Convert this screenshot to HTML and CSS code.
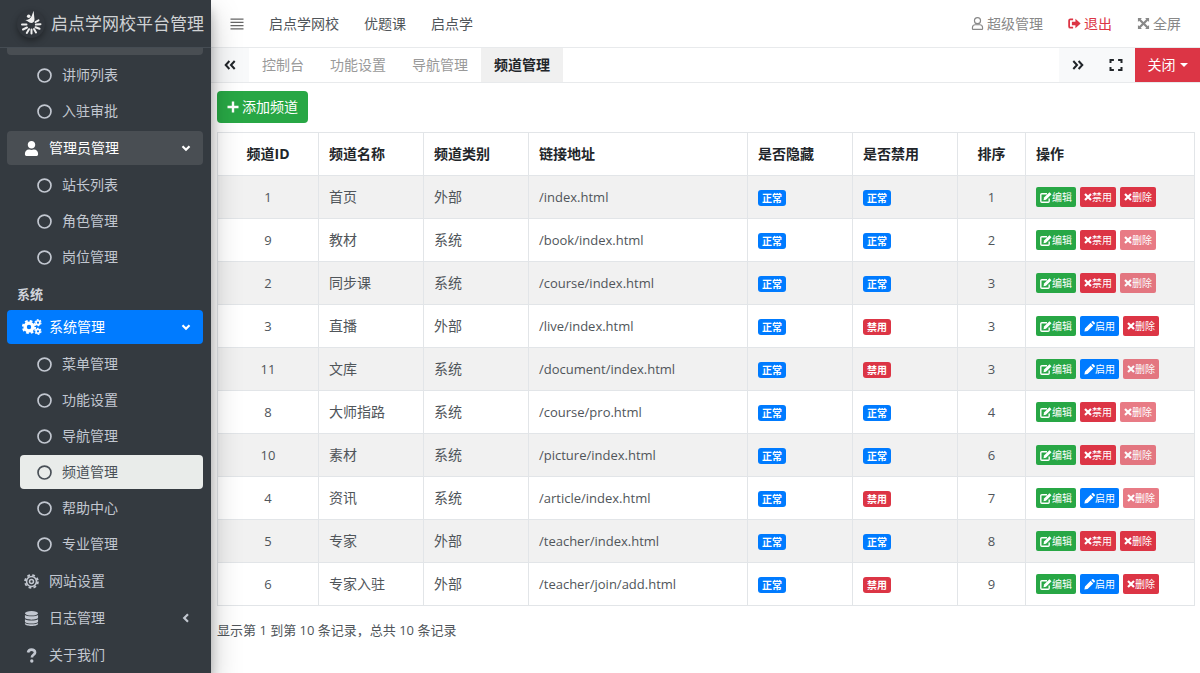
FILE: index.html
```html
<!DOCTYPE html>
<html lang="zh-CN">
<head>
<meta charset="utf-8">
<title>启点学网校平台管理</title>
<link rel="stylesheet" href="styles.css">
</head>
<body>
<svg class="sprite" aria-hidden="true">
  <symbol id="circle" viewBox="0 0 16 16"><circle cx="8" cy="8" r="6.9" fill="none" stroke="currentColor" stroke-width="1.8"/></symbol>
  <symbol id="user" viewBox="0 0 448 512"><path fill="currentColor" d="M224 256c70.7 0 128-57.3 128-128S294.7 0 224 0 96 57.3 96 128s57.3 128 128 128zm89.6 32h-16.7c-22.2 10.2-46.9 16-72.9 16s-50.6-5.8-72.9-16h-16.7C60.2 288 0 348.2 0 422.4V464c0 26.5 21.5 48 48 48h352c26.5 0 48-21.5 48-48v-41.6c0-74.2-60.2-134.4-134.4-134.4z"/></symbol>
  <symbol id="user-o" viewBox="0 0 448 512"><g fill="none" stroke="currentColor" stroke-width="46"><circle cx="224" cy="144" r="120"/><path d="M135 304h178c62 0 111 52 111 118v42c0 14-10 25-24 25H48c-14 0-24-11-24-25v-42c0-66 49-118 111-118z"/></g></symbol>
  <symbol id="down" viewBox="0 0 10 10"><path d="M1.500 3.200 5 6.700 8.500 3.200" fill="none" stroke="currentColor" stroke-width="2.200"/></symbol>
  <symbol id="left" viewBox="0 0 10 10"><path d="M7 1.200 3.200 5 7 8.800" fill="none" stroke="currentColor" stroke-width="2.200"/></symbol>
  <symbol id="cogs" viewBox="0 0 20 16"><g fill="none" stroke="currentColor"><circle cx="7" cy="8" r="3.900" stroke-width="3.400"/><circle cx="7" cy="8" r="6.100" stroke-width="2" stroke-dasharray="2.700 2.090"/><circle cx="16" cy="3.700" r="1.900" stroke-width="1.600"/><circle cx="16" cy="3.700" r="3" stroke-width="1.200" stroke-dasharray="1.800 1.340"/><circle cx="16" cy="12.300" r="1.900" stroke-width="1.600"/><circle cx="16" cy="12.300" r="3" stroke-width="1.200" stroke-dasharray="1.800 1.340"/></g></symbol>
  <symbol id="gear" viewBox="0 0 16 16"><g fill="none" stroke="currentColor"><circle cx="8" cy="8" r="5.300" stroke-width="1.700"/><circle cx="8" cy="8" r="6.900" stroke-width="1.900" stroke-dasharray="2.900 2.519"/><circle cx="8" cy="8" r="2.100" stroke-width="1.600"/></g></symbol>
  <symbol id="database" viewBox="0 0 14 16"><g fill="currentColor"><ellipse cx="7" cy="2.500" rx="7" ry="2.400"/><path d="M0 4.300c2 1.800 12 1.800 14 0V7c0 3-14 3-14 0zM0 8.700c2 1.800 12 1.800 14 0v2.500c0 3-14 3-14 0zM0 12.900c2 1.800 12 1.800 14 0v.600c0 3.200-14 3.200-14 0z"/></g></symbol>
  <symbol id="question" viewBox="0 0 12 16"><path d="M2.300 4.800C2.700 2.600 4.200 1.700 6 1.700c2.200 0 3.800 1.200 3.800 3 0 2.600-3.400 2.500-3.400 5.400" fill="none" stroke="currentColor" stroke-width="2.800"/><circle cx="6.300" cy="13.900" r="1.800" fill="currentColor"/></symbol>
  <symbol id="bars" viewBox="0 0 14 14"><path d="M.500 2.200h13M.500 5.400h13M.500 8.600h13M.500 11.800h13" fill="none" stroke="currentColor" stroke-width="1.300"/></symbol>
  <symbol id="signout" viewBox="0 0 14 12"><path d="M5.500 1.500H2.600c-.900 0-1.400.500-1.400 1.400v6.200c0 .900.500 1.400 1.400 1.400h2.900" fill="none" stroke="currentColor" stroke-width="1.900"/><path d="M8 .900 13.600 6 8 11.100V8H4.200V4H8z" fill="currentColor"/></symbol>
  <symbol id="expand" viewBox="0 0 14 14"><path d="M1 1h4.300L4 2.300l3 3 3-3L8.700 1H13v4.300L11.700 4l-3 3 3 3L13 8.700V13H8.700l1.300-1.300-3-3-3 3L5.300 13H1V8.700L2.300 10l3-3-3-3L1 5.300z" fill="currentColor"/></symbol>
  <symbol id="corners" viewBox="0 0 14 14"><path d="M1.500 5V2h3.400M9.100 2h3.400v3M12.500 9v3H9.100M4.900 12H1.500V9" fill="none" stroke="currentColor" stroke-width="2"/></symbol>
  <symbol id="dleft" viewBox="0 0 12 10"><path d="M5.400 1 1.700 5l3.700 4M10.700 1 7 5l3.700 4" fill="none" stroke="currentColor" stroke-width="2"/></symbol>
  <symbol id="dright" viewBox="0 0 12 10"><path d="M1.300 1 5 5 1.300 9M6.600 1l3.700 4-3.700 4" fill="none" stroke="currentColor" stroke-width="2"/></symbol>
  <symbol id="caret" viewBox="0 0 8 4"><path d="M0 0h8L4 4z" fill="currentColor"/></symbol>
  <symbol id="plus" viewBox="0 0 12 12"><path d="M6 .500v11M.500 6h11" fill="none" stroke="currentColor" stroke-width="2.400"/></symbol>
  <symbol id="times" viewBox="0 0 8 8"><path d="m1 1 6 6M7 1 1 7" fill="none" stroke="currentColor" stroke-width="2.200"/></symbol>
  <symbol id="edit" viewBox="0 0 12 11"><path d="M7 1.800H1.800c-.600 0-1 .400-1 1v6.400c0 .600.400 1 1 1h6.400c.600 0 1-.400 1-1V6.500" fill="none" stroke="currentColor" stroke-width="1.400"/><path d="M3.500 8.200 4 5.600 9.500.200l2 2L6 7.700z" fill="currentColor"/></symbol>
  <symbol id="pencil" viewBox="0 0 11 11"><path d="M.400 10.600 1 7.400 6.600 1.800l2.600 2.600L3.600 10zM7.300 1.100l.700-.700c.600-.500 1.200-.400 1.600 0l1 1c.500.500.500 1.100 0 1.600l-.700.700z" fill="currentColor"/></symbol>
</svg>
<div class="app">
  <aside class="sidebar">
    <a class="brand" href="#">
      <svg class="logo" viewBox="0 0 28 28" aria-hidden="true"><g stroke="#eee" stroke-width="2" stroke-linecap="round" fill="none"><path d="M5 14.500h4.500M6 19.500l4-2M9.800 23l2.200-3.800M14.500 23.500v-4M19 22.500l-2-3.400M22.500 18.800l-4-1.600M23.500 14.200l-4.600.400M21.500 10.300 18.500 12"/></g><circle cx="11.700" cy="6.200" r="1.800" fill="#eee"/><path d="M7 9.700c3.200.900 6.200-.800 7.600-3.500l2-5.500.900 8.500c0 2.200-1.300 3.700-3.300 3.700-2.500 0-3.700-2.600-7.200-3.200z" fill="#eee"/></svg>
      <span>启点学网校平台管理</span>
    </a>
    <nav class="side-nav">
      <div class="nav-cut"></div>
      <div class="tree">
        <a class="nav-link" href="#"><svg><use href="#circle"/></svg>讲师列表</a>
        <a class="nav-link" href="#"><svg><use href="#circle"/></svg>入驻审批</a>
      </div>
      <a class="nav-link open" href="#"><svg><use href="#user"/></svg>管理员管理<svg class="arrow"><use href="#down"/></svg></a>
      <div class="tree">
        <a class="nav-link" href="#"><svg><use href="#circle"/></svg>站长列表</a>
        <a class="nav-link" href="#"><svg><use href="#circle"/></svg>角色管理</a>
        <a class="nav-link" href="#"><svg><use href="#circle"/></svg>岗位管理</a>
      </div>
      <h2 class="nav-header">系统</h2>
      <a class="nav-link current" href="#"><svg class="wide"><use href="#cogs"/></svg>系统管理<svg class="arrow"><use href="#down"/></svg></a>
      <div class="tree">
        <a class="nav-link" href="#"><svg><use href="#circle"/></svg>菜单管理</a>
        <a class="nav-link" href="#"><svg><use href="#circle"/></svg>功能设置</a>
        <a class="nav-link" href="#"><svg><use href="#circle"/></svg>导航管理</a>
        <a class="nav-link selected" href="#"><svg><use href="#circle"/></svg>频道管理</a>
        <a class="nav-link" href="#"><svg><use href="#circle"/></svg>帮助中心</a>
        <a class="nav-link" href="#"><svg><use href="#circle"/></svg>专业管理</a>
      </div>
      <a class="nav-link" href="#"><svg><use href="#gear"/></svg>网站设置</a>
      <a class="nav-link" href="#"><svg><use href="#database"/></svg>日志管理<svg class="arrow"><use href="#left"/></svg></a>
      <a class="nav-link" href="#"><svg><use href="#question"/></svg>关于我们</a>
    </nav>
  </aside>
  <div class="main">
    <header class="topbar">
      <button class="menu-btn" type="button" aria-label="菜单"><svg><use href="#bars"/></svg></button>
      <a href="#">启点学网校</a>
      <a href="#">优题课</a>
      <a href="#">启点学</a>
      <div class="top-right">
        <a href="#"><svg><use href="#user-o"/></svg>超级管理</a>
        <a class="logout" href="#"><svg><use href="#signout"/></svg>退出</a>
        <a href="#"><svg><use href="#expand"/></svg>全屏</a>
      </div>
    </header>
    <div class="tabbar">
      <button class="tab-tool" type="button" aria-label="向左"><svg><use href="#dleft"/></svg></button>
      <nav class="tabs">
        <a href="#">控制台</a>
        <a href="#">功能设置</a>
        <a href="#">导航管理</a>
        <a class="active" href="#">频道管理</a>
      </nav>
      <button class="tab-tool" type="button" aria-label="向右"><svg><use href="#dright"/></svg></button>
      <button class="tab-tool" type="button" aria-label="最大化"><svg class="max"><use href="#corners"/></svg></button>
      <button class="close-btn" type="button">关闭<svg><use href="#caret"/></svg></button>
    </div>
    <main class="content">
      <button class="add-btn" type="button"><svg><use href="#plus"/></svg>添加频道</button>
      <table class="grid">
        <colgroup><col class="c-id"><col class="c-mid"><col class="c-mid"><col class="c-url"><col class="c-mid"><col class="c-mid"><col class="c-sort"><col class="c-ops"></colgroup>
        <thead>
          <tr><th class="num">频道ID</th><th>频道名称</th><th>频道类别</th><th>链接地址</th><th>是否隐藏</th><th>是否禁用</th><th class="num">排序</th><th>操作</th></tr>
        </thead>
        <tbody>
          <tr><td class="num">1</td><td>首页</td><td>外部</td><td class="url">/index.html</td><td><span class="badge">正常</span></td><td><span class="badge">正常</span></td><td class="num">1</td><td><div class="ops"><button class="op green" type="button"><svg class="i-edit"><use href="#edit"/></svg>编辑</button><button class="op red" type="button"><svg><use href="#times"/></svg>禁用</button><button class="op red" type="button"><svg><use href="#times"/></svg>删除</button></div></td></tr>
          <tr><td class="num">9</td><td>教材</td><td>系统</td><td class="url">/book/index.html</td><td><span class="badge">正常</span></td><td><span class="badge">正常</span></td><td class="num">2</td><td><div class="ops"><button class="op green" type="button"><svg class="i-edit"><use href="#edit"/></svg>编辑</button><button class="op red" type="button"><svg><use href="#times"/></svg>禁用</button><button class="op red" type="button" disabled><svg><use href="#times"/></svg>删除</button></div></td></tr>
          <tr><td class="num">2</td><td>同步课</td><td>系统</td><td class="url">/course/index.html</td><td><span class="badge">正常</span></td><td><span class="badge">正常</span></td><td class="num">3</td><td><div class="ops"><button class="op green" type="button"><svg class="i-edit"><use href="#edit"/></svg>编辑</button><button class="op red" type="button"><svg><use href="#times"/></svg>禁用</button><button class="op red" type="button" disabled><svg><use href="#times"/></svg>删除</button></div></td></tr>
          <tr><td class="num">3</td><td>直播</td><td>外部</td><td class="url">/live/index.html</td><td><span class="badge">正常</span></td><td><span class="badge off">禁用</span></td><td class="num">3</td><td><div class="ops"><button class="op green" type="button"><svg class="i-edit"><use href="#edit"/></svg>编辑</button><button class="op blue" type="button"><svg class="i-pencil"><use href="#pencil"/></svg>启用</button><button class="op red" type="button"><svg><use href="#times"/></svg>删除</button></div></td></tr>
          <tr><td class="num">11</td><td>文库</td><td>系统</td><td class="url">/document/index.html</td><td><span class="badge">正常</span></td><td><span class="badge off">禁用</span></td><td class="num">3</td><td><div class="ops"><button class="op green" type="button"><svg class="i-edit"><use href="#edit"/></svg>编辑</button><button class="op blue" type="button"><svg class="i-pencil"><use href="#pencil"/></svg>启用</button><button class="op red" type="button" disabled><svg><use href="#times"/></svg>删除</button></div></td></tr>
          <tr><td class="num">8</td><td>大师指路</td><td>系统</td><td class="url">/course/pro.html</td><td><span class="badge">正常</span></td><td><span class="badge">正常</span></td><td class="num">4</td><td><div class="ops"><button class="op green" type="button"><svg class="i-edit"><use href="#edit"/></svg>编辑</button><button class="op red" type="button"><svg><use href="#times"/></svg>禁用</button><button class="op red" type="button" disabled><svg><use href="#times"/></svg>删除</button></div></td></tr>
          <tr><td class="num">10</td><td>素材</td><td>系统</td><td class="url">/picture/index.html</td><td><span class="badge">正常</span></td><td><span class="badge">正常</span></td><td class="num">6</td><td><div class="ops"><button class="op green" type="button"><svg class="i-edit"><use href="#edit"/></svg>编辑</button><button class="op red" type="button"><svg><use href="#times"/></svg>禁用</button><button class="op red" type="button" disabled><svg><use href="#times"/></svg>删除</button></div></td></tr>
          <tr><td class="num">4</td><td>资讯</td><td>系统</td><td class="url">/article/index.html</td><td><span class="badge">正常</span></td><td><span class="badge off">禁用</span></td><td class="num">7</td><td><div class="ops"><button class="op green" type="button"><svg class="i-edit"><use href="#edit"/></svg>编辑</button><button class="op blue" type="button"><svg class="i-pencil"><use href="#pencil"/></svg>启用</button><button class="op red" type="button" disabled><svg><use href="#times"/></svg>删除</button></div></td></tr>
          <tr><td class="num">5</td><td>专家</td><td>外部</td><td class="url">/teacher/index.html</td><td><span class="badge">正常</span></td><td><span class="badge">正常</span></td><td class="num">8</td><td><div class="ops"><button class="op green" type="button"><svg class="i-edit"><use href="#edit"/></svg>编辑</button><button class="op red" type="button"><svg><use href="#times"/></svg>禁用</button><button class="op red" type="button"><svg><use href="#times"/></svg>删除</button></div></td></tr>
          <tr><td class="num">6</td><td>专家入驻</td><td>外部</td><td class="url">/teacher/join/add.html</td><td><span class="badge">正常</span></td><td><span class="badge off">禁用</span></td><td class="num">9</td><td><div class="ops"><button class="op green" type="button"><svg class="i-edit"><use href="#edit"/></svg>编辑</button><button class="op blue" type="button"><svg class="i-pencil"><use href="#pencil"/></svg>启用</button><button class="op red" type="button"><svg><use href="#times"/></svg>删除</button></div></td></tr>
        </tbody>
      </table>
      <p class="summary">显示第 1 到第 10 条记录，总共 10 条记录</p>
    </main>
  </div>
</div>
</body>
</html>
```
FILE: styles.css
```css
* { box-sizing: border-box; }

body {
  margin: 0;
  background: #fff;
  color: #50555a;
  font: 14px/20px "Open Sans", "Noto Sans CJK SC", sans-serif;
}

a { color: inherit; text-decoration: none; }
button { border: 0; margin: 0; padding: 0; background: none; color: inherit; font: inherit; cursor: pointer; }
svg { display: block; flex: none; }
.sprite { position: absolute; width: 0; height: 0; }

.app { display: flex; height: 100vh; overflow: hidden; }

/* Sidebar */
.sidebar {
  position: relative;
  z-index: 1;
  display: flex;
  flex-direction: column;
  flex: none;
  width: 211px;
  background: #343a40;
  color: #c2c7d0;
  box-shadow: 0 14px 28px rgba(0, 0, 0, .25), 0 10px 10px rgba(0, 0, 0, .22);
}
.brand {
  display: flex;
  align-items: center;
  flex: none;
  gap: 6px;
  height: 48px;
  padding-left: 17px;
  border-bottom: 1px solid #454c53;
  color: #d0d2d4;
  font-size: 17px;
  white-space: nowrap;
}
.logo { width: 28px; height: 28px; border-radius: 50%; background: #31363c; box-shadow: 0 3px 6px rgba(0, 0, 0, .35); }
.side-nav { flex: 1; min-height: 0; padding: 0 8px 0 7px; overflow: hidden; }
.nav-cut { height: 7px; margin-bottom: 3px; border-radius: 0 0 4px 4px; background: #494e53; }
.nav-link {
  display: flex;
  align-items: center;
  height: 34px;
  margin-bottom: 3px;
  padding: 0 12px 0 17px;
  border-radius: 4px;
}
.nav-link svg { width: 15px; height: 15px; margin-right: 10px; }
.nav-link .wide { width: 20px; height: 16px; margin: 0 7px 0 -2px; }
.nav-link .arrow { width: 10px; height: 10px; margin: 0 0 0 auto; }
.tree { padding: 0 0 1px 13px; }
.tree .nav-link { margin-bottom: 2px; }
.nav-link.open { background: #494e53; color: #fff; }
.nav-link.current { background: #007bff; color: #fff; }
.nav-link.selected { background: #e9ecea; color: #495057; }
.nav-header { margin: 0; padding: 7px 10px 6px; font-size: 13px; line-height: 20px; font-weight: 700; color: #d0d4db; }

/* Top bars */
.main { flex: 1; min-width: 0; display: flex; flex-direction: column; }
.topbar {
  display: flex;
  align-items: center;
  gap: 25px;
  flex: none;
  height: 48px;
  padding: 0 19px;
  border-bottom: 1px solid #e8eaec;
}
.menu-btn svg { width: 14px; height: 14px; color: #666; }
.top-right { display: flex; gap: 25px; margin-left: auto; color: #888; }
.top-right a { display: flex; align-items: center; gap: 3px; }
.top-right svg { width: 13px; height: 13px; }
.top-right .logout { color: #dc3545; }
.tabbar { display: flex; flex: none; height: 35px; border-bottom: 1px solid #e8eaec; }
.tab-tool { display: flex; align-items: center; justify-content: center; width: 38px; background: #f8f9fa; color: #212529; }
.tab-tool svg { width: 12px; height: 10px; }
.tab-tool .max { width: 14px; height: 14px; }
.tabs { display: flex; flex: 1; color: #999; }
.tabs a { display: flex; align-items: center; padding: 0 13px; }
.tabs .active { background: #f0f0f0; color: #212529; font-weight: 700; }
.close-btn { display: flex; align-items: center; justify-content: center; gap: 4px; width: 65px; background: #dc3545; color: #fff; }
.close-btn svg { width: 8px; height: 4px; }

/* Content */
.content { flex: 1; min-height: 0; padding: 8px 5px 8px 6px; }
.add-btn {
  display: flex;
  align-items: center;
  gap: 3px;
  height: 32px;
  padding: 0 10px;
  border-radius: 4px;
  background: #28a745;
  color: #fff;
}
.add-btn svg { width: 12px; height: 12px; }
.grid { width: 100%; margin-top: 9px; border-collapse: collapse; table-layout: fixed; }
.c-id { width: 101px; }
.c-mid { width: 105px; }
.c-url { width: 219px; }
.c-sort { width: 68px; }
.c-ops { width: 169px; }
.grid th, .grid td { height: 43px; padding: 0 10px; border: 1px solid #e2e5e8; text-align: left; vertical-align: middle; }
.grid th { color: #212529; font-weight: 700; }
.grid .num { text-align: center; }
.grid td.num, .grid .url { font-size: 13px; }
.grid tbody tr:nth-child(odd) { background: #f1f1f1; }
.badge {
  display: block;
  width: fit-content;
  margin-top: 2px;
  padding: 0 4px;
  border-radius: 3px;
  background: #007bff;
  color: #fff;
  font-size: 10px;
  line-height: 16px;
  font-weight: 700;
}
.badge.off { background: #dc3545; }
.ops { display: flex; gap: 4px; }
.op {
  display: flex;
  align-items: center;
  height: 20px;
  padding: 0 4px;
  border-radius: 2px;
  color: #fff;
  font-size: 10px;
  line-height: 20px;
}
.op svg { width: 8px; height: 8px; }
.op .i-edit { width: 12px; height: 11px; }
.op .i-pencil { width: 11px; height: 11px; }
.green { background: #28a745; }
.red { background: #dc3545; }
.blue { background: #007bff; }
.op:disabled { opacity: .65; }
.summary { margin: 14px 0 0; font-size: 13px; }
```
